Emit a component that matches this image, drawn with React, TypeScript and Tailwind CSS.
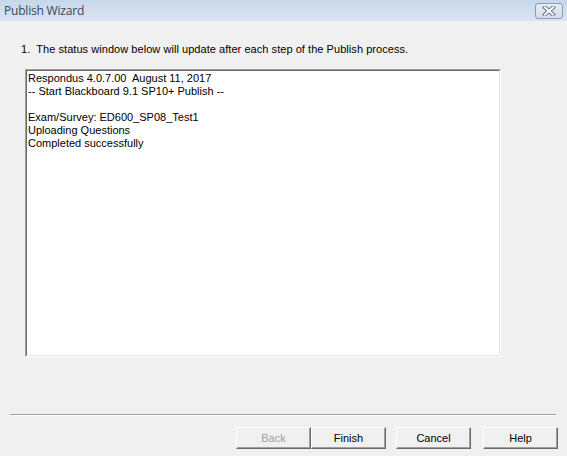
import React from 'react';

const statusLines = [
  'Respondus 4.0.7.00  August 11, 2017',
  '-- Start Blackboard 9.1 SP10+ Publish --',
  '',
  'Exam/Survey: ED600_SP08_Test1',
  'Uploading Questions',
  'Completed successfully',
];

interface WizardButtonProps {
  label: string;
  disabled?: boolean;
  className?: string;
}

const WizardButton: React.FC<WizardButtonProps> = ({ label, disabled, className }) => (
  <button
    disabled={disabled}
    className={
      'h-[22px] w-[75px] bg-[#f0f0f0] text-[11px] leading-none border border-t-white border-l-white border-r-[#696969] border-b-[#696969] shadow-[inset_-1px_-1px_0_#a0a0a0] ' +
      (disabled ? 'text-[#a0a0a0] ' : 'text-black ') +
      (className ?? '')
    }
  >
    {label}
  </button>
);

export default function App() {
  return (
    <div
      className="w-[567px] h-[456px] bg-[#f0f0f0] flex flex-col overflow-hidden"
      style={{ fontFamily: '"Liberation Sans", Arial, sans-serif' }}
    >
      {/* Title bar */}
      <div className="h-[21px] flex items-center justify-between pl-[4px] pr-[4px] bg-gradient-to-b from-[#c7d7ea] to-[#dbe5f1]">
        <span
          className="text-[12px] text-[#3a4656] tracking-[-0.2px]"
          style={{ fontFamily: '"Open Sans", "Noto Sans", sans-serif' }}
        >
          Publish Wizard
        </span>
        <div className="w-[28px] h-[16px] mt-[1px] rounded-[3px] border border-[#8f9cad] bg-gradient-to-b from-[#e4ebf4] to-[#d3ddea] flex items-center justify-center">
          <svg width="14" height="10" viewBox="0 0 14 10">
            <path d="M3 1.5 L11 8.5 M11 1.5 L3 8.5" stroke="#6b7788" strokeWidth="4" strokeLinecap="square" />
            <path d="M3 1.5 L11 8.5 M11 1.5 L3 8.5" stroke="#ffffff" strokeWidth="2" strokeLinecap="square" />
          </svg>
        </div>
      </div>

      {/* Body */}
      <div className="flex-1 flex flex-col">
        <p className="text-[11px] leading-[13px] text-black mt-[22px] ml-[21px] tracking-[0.05px]">
          1.&nbsp; The status window below will update after each step of the Publish process.
        </p>

        <div className="mt-[13px] ml-[25px] w-[476px] h-[288px] bg-white border border-t-[#a0a0a0] border-l-[#a0a0a0] border-b-white border-r-white">
          <div className="w-full h-full border border-t-[#696969] border-l-[#696969] border-b-[#e3e3e3] border-r-[#e3e3e3] px-[1px] pt-[1px]">
            {statusLines.map((line, i) => (
              <div key={i} className="h-[13px] text-[11px] leading-[13px] text-black whitespace-pre">
                {line}
              </div>
            ))}
          </div>
        </div>

        {/* Separator */}
        <div className="mt-[57px] mx-[10px] w-[546px] border-t border-t-[#a0a0a0] border-b border-b-white" />

        {/* Buttons */}
        <div className="mt-[11px] flex pl-[236px]">
          <WizardButton label="Back" disabled />
          <WizardButton label="Finish" />
          <WizardButton label="Cancel" className="ml-[10px]" />
          <WizardButton label="Help" className="ml-[12px]" />
        </div>
      </div>
    </div>
  );
}
